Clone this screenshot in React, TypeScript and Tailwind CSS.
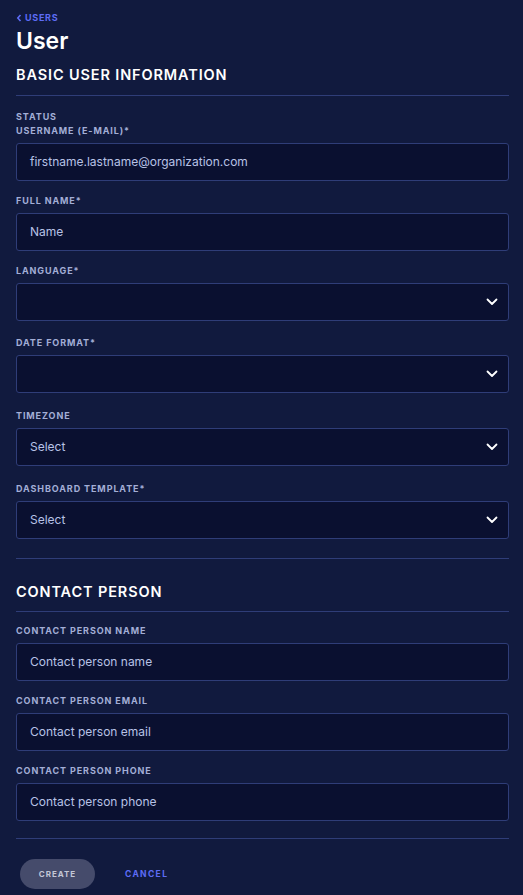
import React from "react";

const Label = ({ children, className = "" }: { children: React.ReactNode; className?: string }) => (
  <div className={`text-[9px] font-bold tracking-[0.1em] text-[#a3aed6] leading-[12px] ${className}`}>{children}</div>
);

const Input = ({ text }: { text: string }) => (
  <div className="h-[38px] mt-[6px] rounded-[3px] border border-[#2f3d78] bg-[#0a1030] flex items-center px-[13px] text-[12px] text-[#b8c2e6]">
    {text}
  </div>
);

const Chevron = () => (
  <svg width="12" height="8" viewBox="0 0 12 8" fill="none">
    <path d="M1.5 1.5 L6 6 L10.5 1.5" stroke="#ffffff" strokeWidth="1.8" strokeLinecap="round" strokeLinejoin="round" />
  </svg>
);

const Select = ({ text }: { text: string }) => (
  <div className="h-[38px] mt-[6px] rounded-[3px] border border-[#2f3d78] bg-[#0a1030] flex items-center justify-between pl-[13px] pr-[10px] text-[12px] text-[#b8c2e6]">
    <span>{text}</span>
    <Chevron />
  </div>
);

const Field = ({ label, children, className = "" }: { label: string; children: React.ReactNode; className?: string }) => (
  <div className={className}>
    <Label>{label}</Label>
    {children}
  </div>
);

export default function App() {
  return (
    <div className="min-h-[895px] bg-[#111a3e] pl-4 pr-[14px] pt-[12px] pb-[6px]" style={{ fontFamily: "Inter, 'Open Sans', sans-serif" }}>
      <div className="flex items-center gap-[3px] text-[9px] font-bold tracking-[0.08em] text-[#5d6cf5] leading-[12px]">
        <svg width="6" height="8" viewBox="0 0 6 8"><path d="M4.5 1 L1.8 4 L4.5 7" stroke="#5d6cf5" strokeWidth="1.6" fill="none" /></svg>
        USERS
      </div>
      <h1 className="text-[23px] font-semibold text-white leading-[26px] mt-[4px]">User</h1>
      <h2 className="text-[14.5px] font-semibold tracking-[0.06em] text-white leading-[18px] mt-[12px]">BASIC USER INFORMATION</h2>
      <div className="h-px bg-[#2f3d78] mt-[11px]" />
      <Label className="mt-[15px]">STATUS</Label>
      <Field label="USERNAME (E-MAIL)*" className="mt-[2px]">
        <Input text="firstname.lastname@organization.com" />
      </Field>
      <Field label="FULL NAME*" className="mt-[14px]">
        <Input text="Name" />
      </Field>
      <Field label="LANGUAGE*" className="mt-[14px]">
        <Select text="" />
      </Field>
      <Field label="DATE FORMAT*" className="mt-[16px]">
        <Select text="" />
      </Field>
      <Field label="TIMEZONE" className="mt-[17px]">
        <Select text="Select" />
      </Field>
      <Field label="DASHBOARD TEMPLATE*" className="mt-[17px]">
        <Select text="Select" />
      </Field>
      <div className="h-px bg-[#2f3d78] mt-[19px]" />
      <h2 className="text-[14.5px] font-semibold tracking-[0.06em] text-white leading-[18px] mt-[24px]">CONTACT PERSON</h2>
      <div className="h-px bg-[#2f3d78] mt-[10px]" />
      <Field label="CONTACT PERSON NAME" className="mt-[13px]">
        <Input text="Contact person name" />
      </Field>
      <Field label="CONTACT PERSON EMAIL" className="mt-[14px]">
        <Input text="Contact person email" />
      </Field>
      <Field label="CONTACT PERSON PHONE" className="mt-[14px]">
        <Input text="Contact person phone" />
      </Field>
      <div className="h-px bg-[#2f3d78] mt-[17px]" />
      <div className="flex items-center mt-[20px] pl-[4px] gap-[30px]">
        <button className="h-[30px] w-[75px] rounded-full bg-[#454b6b] text-[#c3c7d6] text-[8px] font-bold tracking-[0.12em]">CREATE</button>
        <button className="text-[#5d6cf5] text-[8.5px] font-bold tracking-[0.16em]">CANCEL</button>
      </div>
    </div>
  );
}
